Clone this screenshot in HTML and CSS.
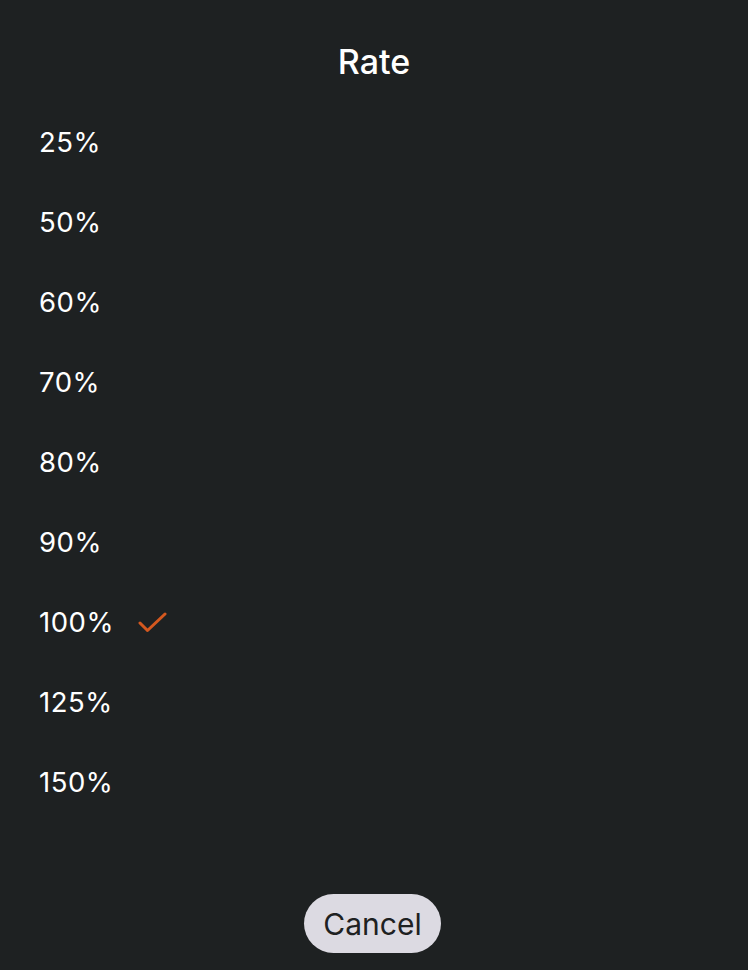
FILE: index.html
```html
<!DOCTYPE html>
<html lang="en">
<head>
<meta charset="utf-8">
<link rel="stylesheet" href="styles.css">
</head>
<body>
<div class="sheet">
  <header class="title">Rate</header>
  <ul class="options">
    <li class="option">25%</li>
    <li class="option">50%</li>
    <li class="option">60%</li>
    <li class="option">70%</li>
    <li class="option">80%</li>
    <li class="option">90%</li>
    <li class="option selected">100%<svg class="check" viewBox="0 0 30 24" width="30" height="24"><path d="M2 12 L9.5 19.5 L27 3" fill="none" stroke="#d4581f" stroke-width="3" stroke-linecap="round" stroke-linejoin="round"/></svg></li>
    <li class="option">125%</li>
    <li class="option">150%</li>
  </ul>
  <div class="actions">
    <button class="cancel">Cancel</button>
  </div>
</div>
</body>
</html>
```
FILE: styles.css
```css
html, body {
  margin: 0;
  padding: 0;
  background: #1e2122;
}
.sheet {
  width: 748px;
  height: 970px;
  display: flex;
  flex-direction: column;
  font-family: Inter, "Noto Sans", sans-serif;
  color: #ffffff;
}
.title {
  height: 82px;
  padding-top: 20px;
  display: flex;
  align-items: center;
  justify-content: center;
  font-size: 34px;
  font-weight: 500;
}
.options {
  list-style: none;
  margin: 0;
  padding: 0 0 0 39px;
}
.option {
  height: 80px;
  display: flex;
  align-items: center;
  font-size: 27.5px;
  font-weight: 400;
  letter-spacing: 0.5px;
}
.check {
  margin-left: 24px;
  margin-top: 2px;
}
.actions {
  margin-top: 72px;
  display: flex;
  justify-content: center;
}
.cancel {
  height: 59px;
  width: 137px;
  border: none;
  border-radius: 30px;
  background: #dcdae2;
  color: #1e2122;
  font-family: Inter, "Noto Sans", sans-serif;
  font-size: 30px;
  padding: 0;
  margin-right: 3px;
}
```
